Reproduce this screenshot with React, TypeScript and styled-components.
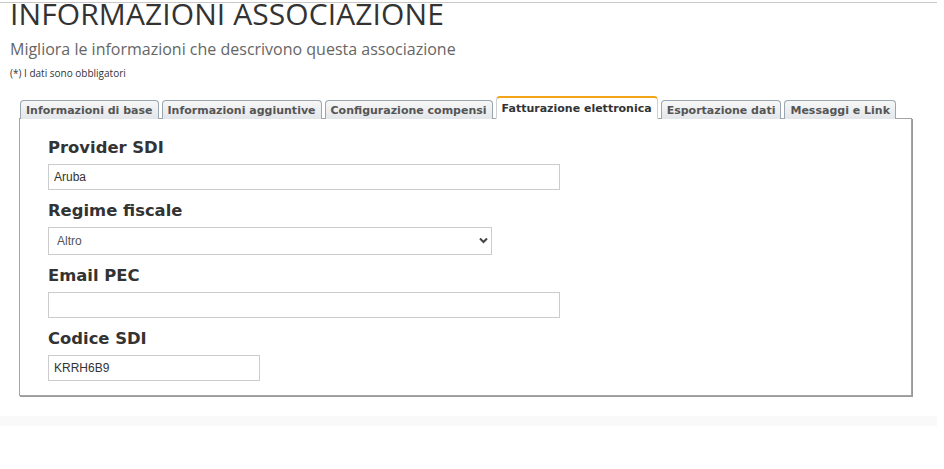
import React from 'react';
import styled, { createGlobalStyle } from 'styled-components';

const GlobalStyle = createGlobalStyle`
  html, body {
    margin: 0;
    padding: 0;
    background: #ffffff;
  }
  body {
    font-family: "Open Sans", "Liberation Sans", Arial, sans-serif;
    color: #333;
  }
`;

const TopRule = styled.div`
  height: 2px;
  border-bottom: 1px solid #c8c8c8;
  width: 937px;
`;

const Page = styled.div`
  width: 944px;
  height: 466px;
  display: flex;
  flex-direction: column;
`;

const Header = styled.div`
  padding-left: 10px;
`;

const Title = styled.h1`
  margin: 0;
  font-family: "Open Sans", sans-serif;
  font-weight: 400;
  font-size: 30px;
  line-height: 22px;
  color: #333;
  letter-spacing: 0.1px;
`;

const Subtitle = styled.h2`
  margin: 12px 0 0;
  font-family: "Open Sans", sans-serif;
  font-weight: 400;
  font-size: 16px;
  line-height: 24px;
  color: #666;
`;

const Note = styled.div`
  margin-top: 5px;
  font-size: 10px;
  line-height: 14px;
  color: #333;
`;

const TabsArea = styled.div`
  margin: 16px 0 0 19px;
  width: 893px;
`;

const TabBar = styled.div`
  display: flex;
  align-items: flex-end;
  gap: 3px;
  padding-left: 1px;
  margin-bottom: -1px;
  position: relative;
  z-index: 1;
`;

const Tab = styled.div<{ active?: boolean }>`
  box-sizing: border-box;
  height: ${p => (p.active ? '23px' : '19px')};
  padding: 0 5px;
  display: flex;
  align-items: center;
  font-family: "DejaVu Sans", Verdana, sans-serif;
  font-weight: bold;
  font-size: 11px;
  white-space: nowrap;
  border-radius: 4px 4px 0 0;
  color: ${p => (p.active ? '#333' : '#555')};
  border: 1px solid ${p => (p.active ? '#d0d0d0' : '#9aa7b3')};
  border-top: ${p => (p.active ? '2px solid #f2a516' : '1px solid #9aa7b3')};
  border-bottom: ${p => (p.active ? '1px solid #fff' : 'none')};
  background: ${p => (p.active ? '#fff' : 'linear-gradient(#f7f7f7, #e3e6ea)')};
  padding-top: ${p => (p.active ? '0' : '1px')};
`;

const Panel = styled.div`
  box-sizing: border-box;
  border: 1px solid #a4a4a4;
  box-shadow: 1px 1px 0 #9a9a9a;
  padding: 17px 28px 13px;
  display: flex;
  flex-direction: column;
  height: 278px;
`;

const Field = styled.div`
  display: flex;
  flex-direction: column;
  margin-bottom: 9px;
`;

const Label = styled.label`
  font-family: "DejaVu Sans", Verdana, sans-serif;
  font-weight: bold;
  font-size: 16.4px;
  line-height: 24px;
  color: #333;
  margin-bottom: 4px;
`;

const TextInput = styled.input<{ w: number }>`
  box-sizing: border-box;
  width: ${p => p.w}px;
  height: 26px;
  border: 1px solid #ccc;
  padding: 0 5px;
  font-family: "Liberation Sans", Arial, sans-serif;
  font-size: 12px;
  color: #333;
  outline: none;
`;

const SelectWrap = styled.div`
  position: relative;
  width: 444px;
`;

const Select = styled.select`
  box-sizing: border-box;
  width: 444px;
  height: 28px;
  appearance: none;
  -webkit-appearance: none;
  border: 1px solid #ccc;
  background: #fff;
  padding: 0 8px;
  font-family: "Liberation Sans", Arial, sans-serif;
  font-size: 12px;
  color: #555;
  outline: none;
`;

const Chevron = styled.svg`
  position: absolute;
  right: 4px;
  top: 10px;
  width: 9px;
  height: 7px;
  pointer-events: none;
`;

const Footer = styled.div`
  margin-top: 20px;
  width: 937px;
  height: 10px;
  background: #f9f9f9;
`;

const tabs = [
  'Informazioni di base',
  'Informazioni aggiuntive',
  'Configurazione compensi',
  'Fatturazione elettronica',
  'Esportazione dati',
  'Messaggi e Link',
];

export default function App() {
  return (
    <>
      <GlobalStyle />
      <Page>
        <TopRule />
        <Header>
          <Title>INFORMAZIONI ASSOCIAZIONE</Title>
          <Subtitle>Migliora le informazioni che descrivono questa associazione</Subtitle>
          <Note>(*) I dati sono obbligatori</Note>
        </Header>
        <TabsArea>
          <TabBar>
            {tabs.map(t => (
              <Tab key={t} active={t === 'Fatturazione elettronica'}>
                {t}
              </Tab>
            ))}
          </TabBar>
          <Panel>
            <Field>
              <Label>Provider SDI</Label>
              <TextInput w={512} defaultValue="Aruba" />
            </Field>
            <Field>
              <Label>Regime fiscale</Label>
              <SelectWrap>
                <Select defaultValue="Altro">
                  <option>Altro</option>
                </Select>
                <Chevron viewBox="0 0 9 7">
                  <path d="M1 1.5 L4.5 5 L8 1.5" stroke="#444" strokeWidth="2" fill="none" />
                </Chevron>
              </SelectWrap>
            </Field>
            <Field>
              <Label>Email PEC</Label>
              <TextInput w={512} defaultValue="" />
            </Field>
            <Field>
              <Label>Codice SDI</Label>
              <TextInput w={212} defaultValue="KRRH6B9" />
            </Field>
          </Panel>
        </TabsArea>
        <Footer />
      </Page>
    </>
  );
}
